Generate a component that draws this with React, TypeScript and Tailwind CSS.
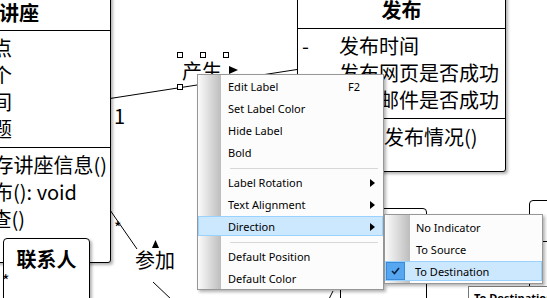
import React from 'react';

function Arrow() {
  return (
    <svg width="5" height="8" viewBox="0 0 5 8" className="shrink-0">
      <path d="M0 0 L5 4 L0 8 Z" fill="#000" />
    </svg>
  );
}

function MenuItem({ label, shortcut, sub, active }: { label: string; shortcut?: string; sub?: boolean; active?: boolean }) {
  return (
    <div className="h-[22px] py-px">
      <div
        className={
          active
            ? 'flex h-full items-center border border-[#99d1ff] bg-[#cce8ff] pl-[29px] pr-[7px] pt-px'
            : 'flex h-full items-center border border-transparent pl-[29px] pr-[7px] pt-px'
        }
      >
        <span className="flex-1">{label}</span>
        {shortcut && <span className="mr-[15px]">{shortcut}</span>}
        {sub && <Arrow />}
      </div>
    </div>
  );
}

function Separator({ pad }: { pad: string }) {
  return (
    <div className={'h-[8px] ' + pad}>
      <div className="ml-[32px] mr-[5px] h-px bg-[#d7d7d7]" />
    </div>
  );
}

function Handle() {
  return <div className="h-[6px] w-[6px] border border-black bg-white" />;
}

export default function App() {
  return (
    <div className="relative h-[298px] w-[547px] overflow-hidden bg-white font-['Noto_Sans_CJK_SC',sans-serif] text-black">
      {/* connectors */}
      <svg className="absolute inset-0" width="547" height="298">
        <g stroke="#000" strokeWidth="1" fill="none">
          <line x1="110" y1="98.5" x2="297" y2="69.5" />
          <line x1="110" y1="210" x2="137" y2="249" />
          <line x1="153" y1="282" x2="172" y2="300" />
          <line x1="333" y1="291" x2="329" y2="299" />
          <line x1="353" y1="290" x2="349" y2="299" />
          <line x1="409" y1="283" x2="421" y2="299" />
          <line x1="409" y1="291" x2="423" y2="284" />
          <line x1="0" y1="250.5" x2="3" y2="250.5" />
        </g>
      </svg>

      {/* 讲座 class */}
      <div className="absolute left-[-150px] top-[-10px] flex h-[273px] w-[261px] flex-col rounded-[3px] border border-black bg-white shadow-[2px_2px_3px_rgba(0,0,0,0.3)]">
        <div className="h-[40px] border-b border-black pr-[71px] pt-[12px] text-right text-[20px] font-bold leading-[20px]">发布讲座</div>
        <div className="h-[117px] border-b border-black pr-[98px] pt-[3px] text-right text-[20px] leading-[27px]">
          <div>- 讲座地点</div>
          <div>- 人数个</div>
          <div>- 讲座时间</div>
          <div>- 讲座主题</div>
        </div>
        <div className="pt-[3px] text-[20px] leading-[27px]">
          <div className="pr-[3px] text-right">+ 保存讲座信息()</div>
          <div className="pr-[33px] text-right">+ 发布(): void</div>
          <div className="pr-[85px] text-right">+ 查()</div>
        </div>
      </div>

      {/* 发布 class */}
      <div className="absolute left-[297px] top-[-10px] flex h-[182px] w-[209px] flex-col rounded-[3px] border border-black bg-white shadow-[2px_2px_3px_rgba(0,0,0,0.3)]">
        <div className="h-[38px] border-b border-black pt-[9px] text-center text-[20px] font-bold leading-[20px]">发布</div>
        <div className="h-[90px] border-b border-black pl-[4px] pt-[3px] text-[20px] leading-[27px]">
          <div className="flex">
            <span className="w-[37px]">-</span>
            <span>发布时间</span>
          </div>
          <div className="flex">
            <span className="w-[37px]">-</span>
            <span>发布网页是否成功</span>
          </div>
          <div className="flex">
            <span className="w-[37px]">-</span>
            <span>发布邮件是否成功</span>
          </div>
        </div>
        <div className="pl-[4px] pt-[4px] text-[20px] leading-[27px]">
          <div className="flex">
            <span className="w-[42px]">+</span>
            <span>查询发布情况()</span>
          </div>
        </div>
      </div>

      {/* 联系人 class */}
      <div className="absolute left-[3px] top-[238px] h-[80px] w-[87px] rounded-[4px] border border-black bg-white pt-[10px] text-center text-[20px] font-bold leading-[20px] shadow-[2px_2px_3px_rgba(0,0,0,0.3)]">
        联系人
      </div>

      {/* partial classes on the right */}
      <div className="absolute left-[340px] top-[208px] h-[100px] w-[87px] rounded-[4px] border border-black bg-white" />
      <div className="absolute left-[529px] top-[200px] h-[120px] w-[40px] rounded-[4px] border border-black bg-white">
        <div className="h-[41px] border-b border-black" />
      </div>

      {/* labels */}
      <div className="absolute left-[114px] top-[102px] text-[20px] leading-[27px]">1</div>
      <div className="absolute left-[114px] top-[217px] text-[16px] leading-[20px]">*</div>
      <div className="absolute left-[2px] top-[270px] text-[16px] leading-[20px]">*</div>
      <div className="absolute left-[135px] top-[246px] text-[20px] leading-[27px]">参加</div>
      <svg className="absolute left-[152px] top-[240px]" width="7" height="8" viewBox="0 0 7 8">
        <path d="M3.5 0 L7 8 L0 8 Z" fill="#000" />
      </svg>

      {/* selected label 产生 */}
      <div className="absolute left-[182px] top-[57px] text-[20px] leading-[27px]">产生</div>
      <svg className="absolute left-[229px] top-[66px]" width="9" height="8" viewBox="0 0 9 8">
        <path d="M0 0 L9 4 L0 8 Z" fill="#000" />
      </svg>
      <div className="absolute left-[177px] top-[52px] flex w-[52px] justify-between">
        <Handle />
        <Handle />
        <Handle />
      </div>
      <div className="absolute left-[177px] top-[84px]">
        <Handle />
      </div>

      {/* context menu */}
      <div className="absolute left-[197px] top-[74px] w-[187px] border border-[#979797] bg-[linear-gradient(to_right,#fbfbfb_0px,#bdbdbd_23px,#fcfcfc_23px)] font-['Noto_Sans',sans-serif] text-[11px] leading-[15px] shadow-[2px_2px_3px_rgba(0,0,0,0.3)]">
        <MenuItem label="Edit Label" shortcut="F2" />
        <MenuItem label="Set Label Color" />
        <MenuItem label="Hide Label" />
        <MenuItem label="Bold" />
        <Separator pad="pt-[5px]" />
        <MenuItem label="Label Rotation" sub />
        <MenuItem label="Text Alignment" sub />
        <MenuItem label="Direction" sub active />
        <Separator pad="pt-[5px]" />
        <MenuItem label="Default Position" />
        <MenuItem label="Default Color" />
      </div>

      {/* submenu */}
      <div className="absolute left-[384px] top-[214px] w-[159px] border border-[#979797] bg-[linear-gradient(to_right,#fbfbfb_0px,#bdbdbd_25px,#fcfcfc_25px)] py-px font-['Noto_Sans',sans-serif] text-[11px] leading-[15px] shadow-[2px_2px_3px_rgba(0,0,0,0.3)]">
        <div className="flex h-[22px] items-center pl-[31px] pt-px">No Indicator</div>
        <div className="flex h-[22px] items-center pl-[31px] pt-px">To Source</div>
        <div className="h-[22px] py-px">
          <div className="flex h-full items-center border border-[#99d1ff] bg-[#cce8ff]">
            <div className="flex h-full w-[19px] items-center justify-center border border-[#3a8ad8] bg-[#56a6f0]">
              <svg width="9" height="8" viewBox="0 0 9 8">
                <path d="M1 4 L3.5 6.5 L8 1" stroke="#0b2440" strokeWidth="1.6" fill="none" />
              </svg>
            </div>
            <span className="ml-[10px] pt-px">To Destination</span>
          </div>
        </div>
      </div>

      {/* tooltip */}
      <div className="absolute left-[468px] top-[286px] h-[24px] w-[100px] border border-[#767676] bg-white pl-[5px] pt-[3px] font-['Noto_Sans',sans-serif] text-[11px] font-bold leading-[15px]">
        To Destination
      </div>
    </div>
  );
}
